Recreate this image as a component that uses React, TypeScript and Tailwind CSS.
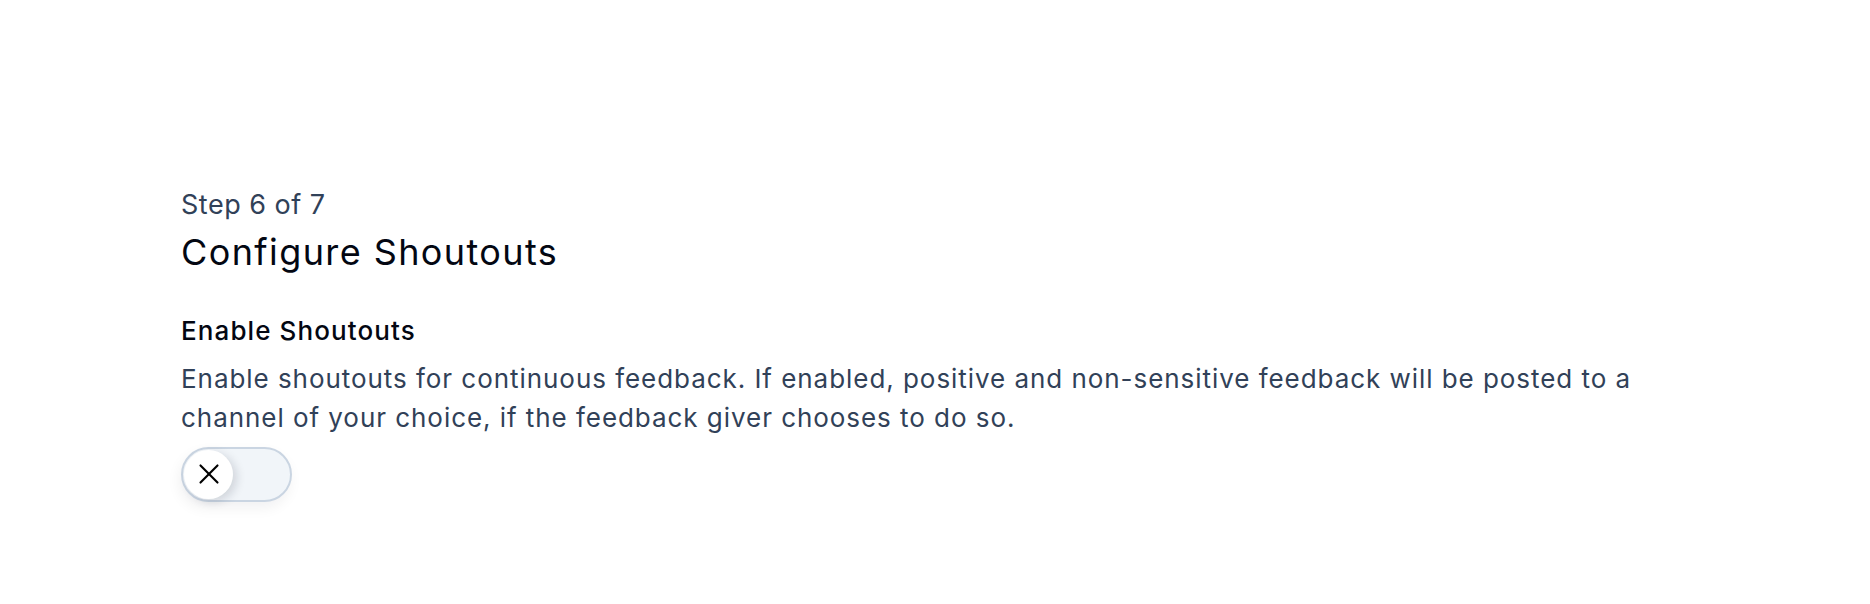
import { X } from "lucide-react";

function ShoutoutsToggle() {
	return (
		<button
			type="button"
			role="switch"
			aria-checked="false"
			className="flex items-center w-[111px] h-[55px] rounded-full border-2 border-slate-300 bg-slate-100 p-[1px] shadow-[-2px_6px_14px_rgba(15,23,42,0.06)]"
		>
			<span className="flex items-center justify-center w-[49px] h-[49px] rounded-full bg-white shadow-[4px_3px_10px_rgba(15,23,42,0.14)]">
				<X className="w-[34px] h-[34px] text-black" strokeWidth={1.5} />
			</span>
		</button>
	);
}

function App() {
	return (
		<div
			className="min-h-[604px] bg-white px-[181px] pt-[187px]"
			style={{ fontFamily: "Inter, 'Noto Sans', sans-serif" }}
		>
			<p className="text-[27px] leading-[36px] tracking-[0.5px] text-slate-700">Step 6 of 7</p>
			<h1 className="mt-[7px] text-[36px] leading-[44px] tracking-[1.4px] text-gray-950">
				Configure Shoutouts
			</h1>
			<div className="mt-[39px] flex flex-col">
				<h2 className="text-[26px] leading-[36px] tracking-[1.1px] font-medium text-gray-950">
					Enable Shoutouts
				</h2>
				<p className="mt-[10px] text-[26px] leading-[39.4px] tracking-[0.95px] text-slate-700">
					Enable shoutouts for continuous feedback. If enabled, positive and non-sensitive
					feedback will be posted to a channel of your choice, if the feedback giver chooses
					to do so.
				</p>
				<div className="mt-[9px]">
					<ShoutoutsToggle />
				</div>
			</div>
		</div>
	);
}

export default App;
